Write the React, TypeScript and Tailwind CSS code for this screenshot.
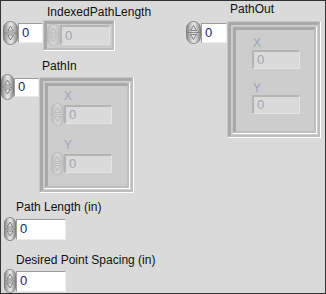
import React from "react";

function Spinner({ w = 13, h = 22, disabled = false }: { w?: number; h?: number; disabled?: boolean }) {
    const id = disabled ? "spin-off" : "spin-on";
    const edge = disabled ? "#bdbdbd" : "#858585";
    const mid = disabled ? "#d6d6d6" : "#e2e2e2";
    const line = disabled ? "#b9b9b9" : "#767676";
    const arrow = disabled ? "#b2b2b2" : "#6a6a6a";
    const cx = w / 2;
    const m = h / 2;
    return (
        <svg width={w} height={h} viewBox={`0 0 ${w} ${h}`} className="block shrink-0">
            <defs>
                <linearGradient id={id} x1="0" x2="1" y1="0" y2="0">
                    <stop offset="0" stopColor={edge} />
                    <stop offset="0.45" stopColor={mid} />
                    <stop offset="0.6" stopColor={mid} />
                    <stop offset="1" stopColor={edge} />
                </linearGradient>
            </defs>
            <rect x="0.5" y="0.5" width={w - 1} height={h - 1} rx={(w - 1) / 2} fill={`url(#${id})`} stroke={line} strokeWidth="0.8" />
            <line x1="1.5" x2={w - 1.5} y1={m} y2={m} stroke={line} strokeWidth="0.8" />
            <path d={`M${cx} ${m - 7} L${cx - 2.8} ${m - 2} L${cx + 2.8} ${m - 2} Z`} fill={mid} stroke={arrow} strokeWidth="0.8" />
            <path d={`M${cx} ${m + 7} L${cx - 2.8} ${m + 2} L${cx + 2.8} ${m + 2} Z`} fill={mid} stroke={arrow} strokeWidth="0.8" />
        </svg>
    );
}

function Numeric({ className = "", disabled = false }: { className?: string; disabled?: boolean }) {
    if (disabled) {
        return (
            <div className={`flex items-center bg-[#dadada] border-t-2 border-l-2 border-t-[#b4b4b4] border-l-[#b4b4b4] border-b border-r border-b-[#e4e4e4] border-r-[#e4e4e4] pl-[3px] text-[13px] text-[#9fa3bb] ${className}`}>
                0
            </div>
        );
    }
    return (
        <div className={`flex items-center bg-white border-t border-l border-t-[#9c9c9c] border-l-[#9c9c9c] border-b border-r border-b-[#ececec] border-r-[#ececec] pl-[3px] text-[13px] text-[#1a1a7a] ${className}`}>
            0
        </div>
    );
}

// sunken LabVIEW frame (array element / cluster border)
function Frame({ children, className = "" }: { children: React.ReactNode; className?: string }) {
    return (
        <div className={`border-t border-l border-t-[#c8c8c8] border-l-[#c8c8c8] border-b border-r border-b-white border-r-white ${className}`}>
            <div className="h-full border-t-[3px] border-l-[3px] border-t-[#a9a9a9] border-l-[#a9a9a9] border-b-2 border-r-2 border-b-[#bebebe] border-r-[#bebebe] bg-[#cdcdcd]">
                {children}
            </div>
        </div>
    );
}

function ClusterXY({ withSpin }: { withSpin: boolean }) {
    return (
        <div className="flex flex-col">
            <div className={`h-[14px] leading-[14px] text-[#a2a4b8] ${withSpin ? "ml-[13px]" : "ml-[1px]"}`}>X</div>
            <div className="flex items-center">
                {withSpin && <Spinner w={13} h={23} disabled />}
                <Numeric disabled className="w-[48px] h-[19px]" />
            </div>
            <div className={`h-[14px] leading-[14px] text-[#a2a4b8] mt-[12px] ${withSpin ? "ml-[13px]" : "ml-[1px]"}`}>Y</div>
            <div className="flex items-center">
                {withSpin && <Spinner w={13} h={23} disabled />}
                <Numeric disabled className="w-[48px] h-[19px]" />
            </div>
        </div>
    );
}

export default function App() {
    return (
        <div className="relative w-[326px] h-[294px] overflow-hidden border border-[#333333] bg-[#dadada] font-['Liberation_Sans',Arial,sans-serif] text-[12px] leading-[14px] text-[#111111]">
            {/* IndexedPathLength */}
            <div className="absolute left-[2px] top-[4px]">
                <div className="ml-[44px] h-[14px]">IndexedPathLength</div>
                <div className="flex items-start mt-[1px]">
                    <div className="flex items-center mt-[1px]">
                        <Spinner w={15} h={24} />
                        <Numeric className="w-[25px] h-[20px]" />
                    </div>
                    <Frame className="w-[72px] h-[31px]">
                        <div className="flex items-center">
                            <Spinner w={13} h={22} disabled />
                            <Numeric disabled className="w-[50px] h-[20px]" />
                        </div>
                    </Frame>
                </div>
            </div>

            {/* PathIn */}
            <div className="absolute left-0 top-[58px]">
                <div className="ml-[41px] h-[14px]">PathIn</div>
                <div className="flex items-start mt-[4px]">
                    <div className="flex items-center mt-[-3px]">
                        <Spinner w={13} h={26} />
                        <Numeric className="w-[25px] h-[19px]" />
                    </div>
                    <Frame className="w-[95px] h-[116px]">
                        <div className="p-[1px] h-full">
                            <Frame className="h-full">
                                <div className="pl-[3px] pt-[3px]">
                                    <ClusterXY withSpin />
                                </div>
                            </Frame>
                        </div>
                    </Frame>
                </div>
            </div>

            {/* PathOut */}
            <div className="absolute left-[185px] top-[1px]">
                <div className="ml-[44px] h-[14px]">PathOut</div>
                <div className="flex items-start mt-[5px]">
                    <div className="flex items-center">
                        <Spinner w={15} h={23} />
                        <Numeric className="w-[26px] h-[20px]" />
                    </div>
                    <Frame className="w-[94px] h-[117px]">
                        <div className="p-[1px] h-full">
                            <Frame className="h-full">
                                <div className="pl-[16px] pt-[6px]">
                                    <ClusterXY withSpin={false} />
                                </div>
                            </Frame>
                        </div>
                    </Frame>
                </div>
            </div>

            {/* Path Length (in) */}
            <div className="absolute left-[3px] top-[199px]">
                <div className="ml-[12px] h-[14px]">Path Length (in)</div>
                <div className="flex items-center mt-[3px]">
                    <Spinner w={12} h={24} />
                    <Numeric className="w-[50px] h-[21px]" />
                </div>
            </div>

            {/* Desired Point Spacing (in) */}
            <div className="absolute left-[3px] top-[252px]">
                <div className="ml-[12px] h-[14px]">Desired Point Spacing (in)</div>
                <div className="flex items-center mt-[2px]">
                    <Spinner w={12} h={24} />
                    <Numeric className="w-[50px] h-[21px]" />
                </div>
            </div>
        </div>
    );
}
